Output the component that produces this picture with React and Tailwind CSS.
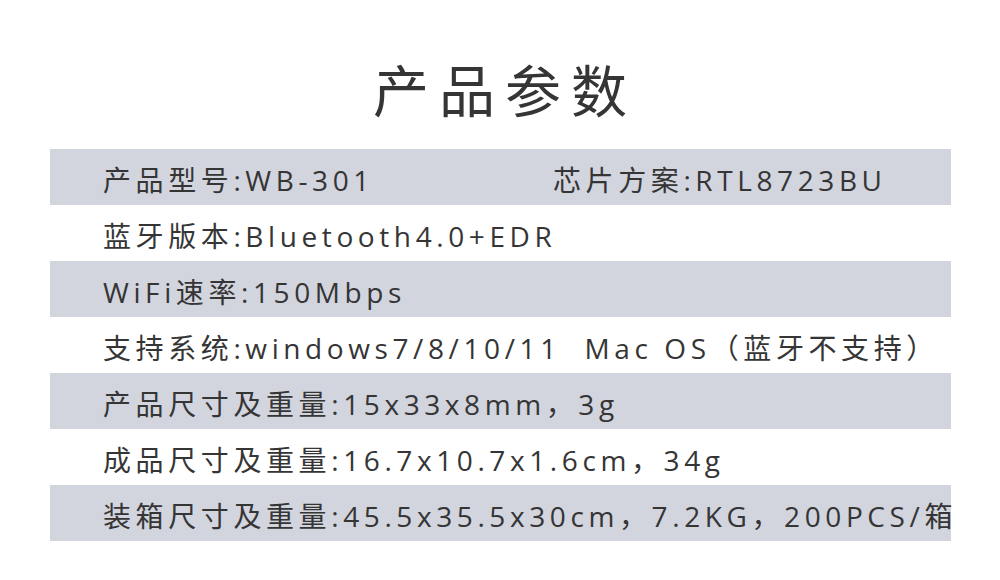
const rows = [
  { left: '产品型号:WB-301', right: '芯片方案:RTL8723BU' },
  { left: '蓝牙版本:Bluetooth4.0+EDR' },
  { left: 'WiFi速率:150Mbps' },
  { left: '支持系统:windows7/8/10/11  Mac OS（蓝牙不支持）' },
  { left: '产品尺寸及重量:15x33x8mm，3g' },
  { left: '成品尺寸及重量:16.7x10.7x1.6cm，34g' },
  { left: '装箱尺寸及重量:45.5x35.5x30cm，7.2KG，200PCS/箱' },
]

export default function App() {
  return (
    <div
      className="h-[580px] w-[1000px] bg-white text-[#353535]"
      style={{ fontFamily: '"Open Sans", "Noto Sans CJK SC", sans-serif' }}
    >
      <h1 className="pt-[55px] pb-[24px] text-center text-[56px] leading-[70px] tracking-[10px] pl-[10px] font-normal">
        产品参数
      </h1>
      <div className="mx-[50px] w-[901px]">
        {rows.map((r, i) => (
          <div
            key={i}
            className={`flex h-[56px] items-center pl-[53px] pt-[5px] text-[28px] tracking-[4.6px] whitespace-pre ${
              i % 2 === 0 ? 'bg-[#d2d4de]' : 'bg-white'
            }`}
          >
            <span className="w-[450px] shrink-0">{r.left}</span>
            {r.right && <span>{r.right}</span>}
          </div>
        ))}
      </div>
    </div>
  )
}
